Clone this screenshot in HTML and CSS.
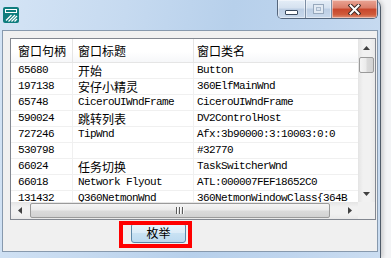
FILE: index.html
```html
<!DOCTYPE html>
<html lang="zh-CN">
<head>
  <meta charset="UTF-8">
  <title>窗口枚举</title>
  <link rel="stylesheet" href="styles.css">
</head>
<body>

  <div class="window">
    <div class="titlebar">
      <svg class="app-icon" viewBox="0 0 16 16">
        <rect width="16" height="16" rx="2" fill="#0f7d7e"/>
        <rect x="2.5" y="2.5" width="11" height="3" fill="none" stroke="#fff"/>
        <path d="M3 13.5 L8.5 8 M5.5 14.5 L12 8 M8.5 14.5 L14 9 M11.5 14.5 L14 12" stroke="#fff" stroke-width="1.3"/>
      </svg>
      <div class="caption">
        <span class="cap min"><i></i></span>
        <span class="cap max"><i></i></span>
        <span class="cap close">
          <svg width="13" height="11" viewBox="0 0 13 11">
            <path d="M2.5 1.5 L10.5 9.5 M10.5 1.5 L2.5 9.5" stroke="#3d2a26" stroke-width="4" stroke-linecap="square"/>
            <path d="M2.5 1.5 L10.5 9.5 M10.5 1.5 L2.5 9.5" stroke="#fff" stroke-width="2" stroke-linecap="square"/>
          </svg>
        </span>
      </div>
    </div>

    <div class="client">
      <div class="listview">
        <div class="lv-top">
          <div class="lv-content">
            <div class="lv-header">
              <div class="cell c1">窗口句柄</div>
              <div class="cell c2">窗口标题</div>
              <div class="cell c3">窗口类名</div>
            </div>

            <div class="row">
              <div class="cell c1 mono">65680</div>
              <div class="cell c2 zh">开始</div>
              <div class="cell c3 mono">Button</div>
            </div>
            <div class="row">
              <div class="cell c1 mono">197138</div>
              <div class="cell c2 zh">安仔小精灵</div>
              <div class="cell c3 mono">360ElfMainWnd</div>
            </div>
            <div class="row">
              <div class="cell c1 mono">65748</div>
              <div class="cell c2 mono">CiceroUIWndFrame</div>
              <div class="cell c3 mono">CiceroUIWndFrame</div>
            </div>
            <div class="row">
              <div class="cell c1 mono">590024</div>
              <div class="cell c2 zh">跳转列表</div>
              <div class="cell c3 mono">DV2ControlHost</div>
            </div>
            <div class="row">
              <div class="cell c1 mono">727246</div>
              <div class="cell c2 mono">TipWnd</div>
              <div class="cell c3 mono">Afx:3b90000:3:10003:0:0</div>
            </div>
            <div class="row">
              <div class="cell c1 mono">530798</div>
              <div class="cell c2 mono"></div>
              <div class="cell c3 mono">#32770</div>
            </div>
            <div class="row">
              <div class="cell c1 mono">66024</div>
              <div class="cell c2 zh">任务切换</div>
              <div class="cell c3 mono">TaskSwitcherWnd</div>
            </div>
            <div class="row">
              <div class="cell c1 mono">66018</div>
              <div class="cell c2 mono">Network Flyout</div>
              <div class="cell c3 mono">ATL:000007FEF18652C0</div>
            </div>
            <div class="row">
              <div class="cell c1 mono">131432</div>
              <div class="cell c2 mono">Q360NetmonWnd</div>
              <div class="cell c3 mono">360NetmonWindowClass{364B</div>
            </div>
          </div>

          <div class="vscroll">
            <div class="arrow">
              <svg width="7" height="4" viewBox="0 0 7 4"><polygon points="3.5,0 7,4 0,4" fill="#404040"/></svg>
            </div>
            <div class="vthumb"></div>
            <div class="track"></div>
            <div class="arrow">
              <svg width="7" height="4" viewBox="0 0 7 4"><polygon points="0,0 7,0 3.5,4" fill="#404040"/></svg>
            </div>
          </div>
        </div>

        <div class="lv-bottom">
          <div class="hscroll">
            <div class="arrow">
              <svg width="4" height="7" viewBox="0 0 4 7"><polygon points="4,0 4,7 0,3.5" fill="#404040"/></svg>
            </div>
            <div class="htrack">
              <div class="hthumb"><span class="grip"><i></i><i></i><i></i></span></div>
            </div>
            <div class="arrow">
              <svg width="4" height="7" viewBox="0 0 4 7"><polygon points="0,0 4,3.5 0,7" fill="#404040"/></svg>
            </div>
          </div>
          <div class="corner"></div>
        </div>
      </div>

      <div class="actions">
        <div class="btn-wrap">
          <button class="enum-btn">枚举</button>
          <span class="mark"></span>
        </div>
      </div>
    </div>
  </div>

</body>
</html>
```

FILE: styles.css
```css
* {
  box-sizing: border-box;
}

body {
  margin: 0;
  width: 391px;
  height: 258px;
  overflow: hidden;
  background: #f3f4f6;
  font-family: "Noto Sans CJK SC", sans-serif;
  font-size: 12px;
  color: #000;
}

/* window frame */
.window {
  width: 381px;
  height: 258px;
  display: flex;
  flex-direction: column;
  border-right: 1px solid #4f5b69;
  border-top-right-radius: 7px;
  box-shadow: 2px 0 4px rgba(0, 0, 0, 0.18);
  background: linear-gradient(100deg, #d4e4f5 0%, #c6daf0 30%, #b7d0eb 55%, #bfd5ee 78%, #cbddf1 100%);
}

.titlebar {
  height: 30px;
  flex-shrink: 0;
  display: flex;
  align-items: flex-start;
}

.app-icon {
  width: 16px;
  height: 16px;
  margin: 7px 0 0 3px;
}

.caption {
  display: flex;
  margin-left: auto;
  margin-right: 2px;
  height: 19px;
  border: 1px solid #55667c;
  border-top: none;
  border-radius: 0 0 5px 5px;
  overflow: hidden;
}

.cap {
  height: 18px;
  display: flex;
  align-items: center;
  justify-content: center;
  background: linear-gradient(#e4edf7 0%, #d5e1ef 45%, #bccee4 50%, #c9d9ec 100%);
  box-shadow: inset 0 0 0 1px rgba(255, 255, 255, 0.45);
}

.cap + .cap {
  border-left: 1px solid #7d8ea4;
}

.min {
  width: 27px;
}

.min i {
  display: block;
  width: 13px;
  height: 5px;
  margin-top: 6px;
  background: #fff;
  border: 1px solid #3b4a5d;
  border-radius: 1px;
}

.max {
  width: 26px;
}

.max i {
  display: block;
  width: 11px;
  height: 10px;
  border: 1px solid #97a8bc;
  background: #d9e3ef;
  box-shadow: inset 0 0 0 2px #e2eaf3, inset 0 0 0 3px #a9b9cc;
}

.close {
  width: 46px;
  background: linear-gradient(#eaa595 0%, #da7d69 45%, #c8462c 50%, #cf5a3a 80%, #e09178 100%);
}

/* client area */
.client {
  margin: 0 2px;
  height: 222px;
  border: 1px solid #8799ad;
  background: #f0f0f0;
  padding: 7px 0 0 7px;
}

.listview {
  width: 366px;
  height: 182px;
  border: 1px solid #828790;
  background: #fff;
  display: flex;
  flex-direction: column;
}

.lv-top {
  display: flex;
  height: 163px;
}

.lv-content {
  width: 347px;
  overflow: hidden;
}

.lv-header {
  display: flex;
  height: 24px;
  border-bottom: 1px solid #e5e5e5;
  background: linear-gradient(#fff 0%, #fff 55%, #f6f7f9 100%);
}

.lv-header .cell {
  line-height: 23px;
  border-right: 1px solid #e5e5e5;
}

.row {
  display: flex;
  height: 16px;
}

.row .cell {
  line-height: 15px;
  border-right: 1px solid #f0f0f0;
  border-bottom: 1px solid #f0f0f0;
}

.cell {
  white-space: nowrap;
  overflow: hidden;
}

.c1 {
  width: 62px;
  padding-left: 7px;
}

.c2 {
  width: 121px;
  padding-left: 5px;
}

.c3 {
  flex: 1;
  padding-left: 3px;
  border-right: none !important;
}

.mono {
  font-family: "Liberation Mono", "Noto Sans CJK SC", monospace;
  font-size: 11px;
  letter-spacing: -0.6px;
}

.zh {
  font-size: 12px;
}

/* scrollbars */
.vscroll {
  width: 17px;
  display: flex;
  flex-direction: column;
  background: linear-gradient(90deg, #e4e4e4 0%, #f1f1f1 30%, #f1f1f1 70%, #e9e9e9 100%);
}

.arrow {
  width: 17px;
  height: 17px;
  flex-shrink: 0;
  display: flex;
  align-items: center;
  justify-content: center;
}

.vthumb {
  width: 15px;
  height: 16px;
  margin: 1px 0 0 1px;
  border: 1px solid #9a9a9a;
  border-radius: 2px;
  background: linear-gradient(90deg, #f5f5f5 0%, #ebebeb 45%, #dadada 55%, #d2d2d2 100%);
}

.track {
  flex: 1;
}

.lv-bottom {
  display: flex;
  height: 17px;
}

.hscroll {
  width: 347px;
  display: flex;
  background: linear-gradient(#e4e4e4 0%, #f1f1f1 30%, #f1f1f1 70%, #e9e9e9 100%);
}

.htrack {
  flex: 1;
  padding: 1px 0 0 2px;
}

.hthumb {
  width: 300px;
  height: 15px;
  border: 1px solid #9a9a9a;
  border-radius: 2px;
  background: linear-gradient(#f5f5f5 0%, #ebebeb 45%, #dadada 55%, #d2d2d2 100%);
  display: flex;
  align-items: center;
  justify-content: center;
}

.grip {
  display: flex;
  gap: 1px;
}

.grip i {
  display: block;
  width: 2px;
  height: 7px;
  border-left: 1px solid #5a5a5a;
  border-right: 1px solid #fafafa;
}

.corner {
  flex: 1;
  background: #f0f0f0;
}

/* button row */
.actions {
  padding: 3px 0 0 121px;
}

.btn-wrap {
  position: relative;
  display: inline-block;
}

.enum-btn {
  display: block;
  width: 55px;
  height: 20px;
  padding: 0;
  border: 1px solid #5c87a8;
  border-radius: 3px;
  background: linear-gradient(#eaf5fc 0%, #dcecf8 48%, #c9e2f3 52%, #bcdaf0 100%);
  font-family: "Noto Sans CJK SC", sans-serif;
  font-size: 12px;
  line-height: 18px;
  color: #000;
}

.mark {
  position: absolute;
  left: -12px;
  top: -2px;
  width: 73px;
  height: 27px;
  border: 4px solid #f00;
  pointer-events: none;
}
```
